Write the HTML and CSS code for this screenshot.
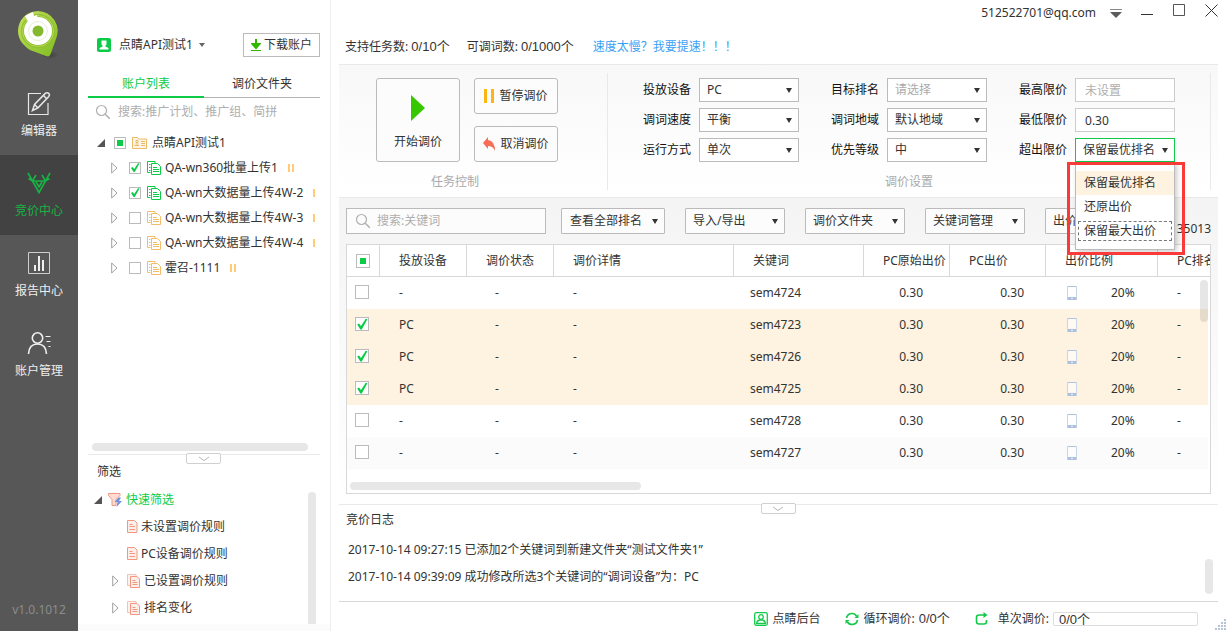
FILE: index.html
```html
<!DOCTYPE html>
<html lang="zh-CN">
<head>
<meta charset="utf-8">
<title>竞价中心</title>
<link rel="stylesheet" href="styles.css">
</head>
<body>
<svg class="defs" aria-hidden="true">
  <symbol id="i-docs" viewBox="0 0 14 14">
    <path d="M3.500 11.500h-3V.500h7.500v1.500" fill="none" stroke="currentColor"/>
    <path d="M2 3.500h1.500M2 6.500h1.500M2 9.500h1.500" stroke="currentColor"/>
    <path d="M4.500 2.500h6l3 3v8h-9z" fill="#fff" stroke="currentColor"/>
    <path d="M6 6.500h4M6 8.500h6M6 10.500h6" stroke="currentColor"/>
  </symbol>
  <symbol id="i-doc" viewBox="0 0 11 13">
    <path d="M.5.5h7l2.500 2.500v9.500H.5z" fill="#fdeee9" stroke="currentColor"/>
    <path d="M2.500 4.500h3M2.500 6.500h5.500M2.500 9.500h5.500" stroke="currentColor"/>
  </symbol>
  <symbol id="i-docs2" viewBox="0 0 14 14">
    <path d="M3 11.500H.5V.5h8.500v2" fill="#fdeee9" stroke="currentColor" opacity=".6"/>
    <path d="M3.500 2.500h6.500l2.500 2.500v8.500h-9z" fill="#fdeee9" stroke="currentColor"/>
    <path d="M5.500 6.500h3M5.500 8.500h5M5.500 10.500h5" stroke="currentColor"/>
  </symbol>
  <symbol id="i-search" viewBox="0 0 16 16">
    <circle cx="6.500" cy="6.500" r="5" fill="none" stroke="currentColor" stroke-width="1.200"/>
    <path d="M10.300 10.300l4.500 4.500" stroke="currentColor" stroke-width="1.500"/>
  </symbol>
  <symbol id="i-closed" viewBox="0 0 7 12">
    <path d="M.7 1v10l5.300-5z" fill="none" stroke="#a0a0a0"/>
  </symbol>
  <symbol id="i-open" viewBox="0 0 8 8"><path d="M8 0v8H0z" fill="#555"/></symbol>
  <symbol id="i-down" viewBox="0 0 12 6"><path d="M1 1l5 3.500L11 1" fill="none" stroke="#b5b5b5"/></symbol>
  <symbol id="i-phone" viewBox="0 0 10 14">
    <rect x="1" y="1" width="8" height="12" fill="#fff" fill-opacity=".6"/>
    <path d="M.5 0v14M9.500 0v14" stroke="#c8d5e8"/>
    <path d="M1 .5h8" stroke="#b3c5de"/>
    <path d="M1 11h8v3H1z" fill="#adc1dc"/>
    <path d="M4 12.500h2" stroke="#e6eef8"/>
  </symbol>
</svg>

<div class="app">
  <nav class="nav">
    <svg class="logo" viewBox="0 0 44 50">
      <defs>
        <linearGradient id="g" x1="0" y1="0" x2="1" y2="1"><stop offset="0" stop-color="#c5e05c"/><stop offset="1" stop-color="#7fbd22"/></linearGradient>
        <radialGradient id="sh"><stop offset="0" stop-color="#333" stop-opacity=".6"/><stop offset="1" stop-color="#333" stop-opacity="0"/></radialGradient>
      </defs>
      <ellipse cx="33" cy="45" rx="9" ry="4" fill="url(#sh)"/>
      <path d="M21 1a20 20 0 0 0-20 20c0 9 6 15 12 19l16 6c3 1 4 0 5-3l5-14A20 20 0 0 0 21 1z" fill="url(#g)"/>
      <circle cx="21" cy="21" r="17" fill="#8fc02e"/>
      <circle cx="21" cy="21" r="15.500" fill="none" stroke="#b9d957" stroke-width="1"/>
      <circle cx="21" cy="21" r="14" fill="#fff"/>
      <path d="M8 6l8-4 1 4 3-1 2 8-9 3z" fill="#fff"/>
      <circle cx="21" cy="21" r="9.500" fill="none" stroke="#e6eed6" stroke-width="1"/>
      <circle cx="21" cy="21" r="5.500" fill="#84b92f"/>
    </svg>
    <a class="nav-item" href="#">
      <svg viewBox="0 0 24 24" fill="none" stroke="#e8e8e8"><path d="M14 2.500H1.500v21h19.500V12" stroke-width="1.200"/><path d="M5.500 19.500l2-6L18.500 2.200q2-1.200 3.300.2t0 3L11 16.800zM16.500 4.500l3.200 3.200M7.500 13.500l3.200 3.300" stroke-width="1.500"/></svg>
      <span>编辑器</span>
    </a>
    <a class="nav-item active" href="#">
      <svg viewBox="0 0 24 24" fill="none" stroke="#17b345" stroke-width="1.600"><path d="M1 2l4.500 8h13L23 2M5.500 10l6.500 11.500L18.500 10M1.500 7.500l4 2.500 3.500-6M22.500 7.500l-4 2.500L15 4M9 11l3 5 3-5"/></svg>
      <span>竞价中心</span>
    </a>
    <a class="nav-item" href="#">
      <svg viewBox="0 0 24 24" fill="none" stroke="#e8e8e8"><path d="M1.500 1.500h21v21h-21z" stroke="#cfcfcf"/><path d="M8 20v-6M12 20V5M16 20V9" stroke="#fff" stroke-width="1.800"/></svg>
      <span>报告中心</span>
    </a>
    <a class="nav-item" href="#">
      <svg viewBox="0 0 24 24" fill="none" stroke="#f0f0f0" stroke-width="1.600"><circle cx="10.500" cy="7" r="5.200"/><path d="M1.500 23q.5-10 9-10t9 10"/><path d="M18.500 5.500h5M19.500 10.500h4M21.500 15.500h2" stroke-width="1.200"/></svg>
      <span>账户管理</span>
    </a>
    <span class="version">v1.0.1012</span>
  </nav>

  <aside class="side">
    <div class="account">
      <svg class="ic14" viewBox="0 0 14 14"><rect width="14" height="14" rx="2" fill="#0ccb47"/><path d="M4.500 2.500h5v4l-1 1v1l3 1.500v1.500h-9v-1.500l3-1.500v-1l-1-1z" fill="#fff"/></svg>
      <button class="account-name">点睛API测试1<span class="tri"></span></button>
      <button class="download"><svg viewBox="0 0 10 12"><path d="M5 0v7M1.500 5L5 9l3.500-4z" fill="#2fb800" stroke="#2fb800" stroke-width="2"/><path d="M0 11.500h10" stroke="#2fb800"/></svg>下载账户</button>
    </div>
    <div class="tabs">
      <button class="tab on">账户列表</button>
      <button class="tab">调价文件夹</button>
    </div>
    <label class="side-search"><svg class="ic16"><use href="#i-search"/></svg><input type="text" aria-label="搜索" placeholder="搜索:推广计划、推广组、简拼"></label>
    <ul class="tree">
      <li class="root"><svg class="open"><use href="#i-open"/></svg><input type="checkbox" class="ck some" aria-label="点睛API测试1">
        <svg class="folder" viewBox="0 0 15 12" fill="none" stroke="#edba69"><path d="M.5 11.500V.5h5l1 1.500h8v9.500z" fill="#fdf5e6"/><path d="M4 3.500h2v2H4zM2.500 8.500h4.500M3.500 7h3M9 4.500h4M9 6.500h4M9 8.500h4"/></svg><span>点睛API测试1</span></li>
      <li><svg class="closed"><use href="#i-closed"/></svg><input type="checkbox" class="ck" checked aria-label="QA-wn360批量上传1"><svg class="docs green"><use href="#i-docs"/></svg><span>QA-wn360批量上传1</span><i class="bars"></i></li>
      <li><svg class="closed"><use href="#i-closed"/></svg><input type="checkbox" class="ck" checked aria-label="QA-wn大数据量上传4W-2"><svg class="docs green"><use href="#i-docs"/></svg><span>QA-wn大数据量上传4W-2</span><i class="bars"></i></li>
      <li><svg class="closed"><use href="#i-closed"/></svg><input type="checkbox" class="ck" aria-label="QA-wn大数据量上传4W-3"><svg class="docs"><use href="#i-docs"/></svg><span>QA-wn大数据量上传4W-3</span><i class="bars"></i></li>
      <li><svg class="closed"><use href="#i-closed"/></svg><input type="checkbox" class="ck" aria-label="QA-wn大数据量上传4W-4"><svg class="docs"><use href="#i-docs"/></svg><span>QA-wn大数据量上传4W-4</span><i class="bars"></i></li>
      <li><svg class="closed"><use href="#i-closed"/></svg><input type="checkbox" class="ck" aria-label="霍召-1111"><svg class="docs"><use href="#i-docs"/></svg><span>霍召-1111</span><i class="bars"></i></li>
    </ul>
    <div class="side-hbar"></div>
    <div class="split"><button aria-label="折叠"><svg><use href="#i-down"/></svg></button></div>
    <div class="filter">
      <h2>筛选</h2>
      <div class="filter-body">
        <ul class="rules">
          <li class="top"><svg class="open"><use href="#i-open"/></svg><svg class="funnel" viewBox="0 0 15 14"><path d="M.5.5h11.500v2L8 6.500v6H4v-6L.5 2.500z" fill="#fcdcd3" stroke="#f0987f"/><path d="M10.500 4.500L6.500 9h3l-1 5L14 8h-3l2-3.500z" fill="#6e93e0"/></svg><span>快速筛选</span></li>
          <li class="leaf"><svg class="doc"><use href="#i-doc"/></svg><span>未设置调价规则</span></li>
          <li class="leaf"><svg class="doc"><use href="#i-doc"/></svg><span>PC设备调价规则</span></li>
          <li class="group"><svg class="closed"><use href="#i-closed"/></svg><svg class="doc2"><use href="#i-docs2"/></svg><span>已设置调价规则</span></li>
          <li class="group"><svg class="closed"><use href="#i-closed"/></svg><svg class="doc2"><use href="#i-docs2"/></svg><span>排名变化</span></li>
        </ul>
        <div class="filter-vbar"></div>
      </div>
    </div>
  </aside>

  <main class="main">
    <header class="titlebar">
      <span class="mail">512522701@qq.com</span>
      <button aria-label="菜单" class="wb menu"><svg viewBox="0 0 12 10"><path d="M0 .5h12" stroke="#888"/><path d="M0 3h12L6 9z" fill="#5c5c5c"/></svg></button>
      <button aria-label="最小化" class="wb"><svg viewBox="0 0 13 13"><path d="M0 10.500h12" stroke="#333"/></svg></button>
      <button aria-label="最大化" class="wb"><svg viewBox="0 0 13 13"><path d="M.5.5h11v11H.5z" fill="none" stroke="#555"/></svg></button>
      <button aria-label="关闭" class="wb"><svg viewBox="0 0 13 13"><path d="M.5.500l12 12M12.500.500l-12 12" stroke="#333"/></svg></button>
    </header>
    <div class="quota">
      <span>支持任务数: <span class="num">0/10个</span></span>
      <span>可调词数: <span class="num">0/1000个</span></span>
      <a href="#">速度太慢<span class="wide-mark">？</span>我要提速<span class="wide-mark">！！！</span></a>
    </div>

    <section class="panel">
      <div class="task">
        <div class="task-buttons">
          <button class="start"><svg viewBox="0 0 14 26"><path d="M0 0v26l14-13z" fill="#36c700"/></svg>开始调价</button>
          <button><svg width="10" height="14" viewBox="0 0 10 14"><path d="M0 0h3v14H0zM7 0h3v14H7z" fill="#ffb414"/></svg>暂停调价</button>
          <button><svg width="12" height="14" viewBox="0 0 12 14"><path d="M0 6l5-6v3q7 1 7 11-2-5-7-5v3z" fill="#f76d57"/></svg>取消调价</button>
        </div>
        <p>任务控制</p>
      </div>
      <div class="settings">
        <div class="fields">
          <div class="field"><label for="dev">投放设备</label><div class="sel"><select id="dev"><option>PC</option></select></div></div>
          <div class="field"><label for="rank">目标排名</label><div class="sel dim"><select id="rank"><option>请选择</option></select></div></div>
          <div class="field"><label for="max">最高限价</label><input id="max" type="text" placeholder="未设置"></div>
          <div class="field"><label for="speed">调词速度</label><div class="sel"><select id="speed"><option>平衡</option></select></div></div>
          <div class="field"><label for="area">调词地域</label><div class="sel"><select id="area"><option>默认地域</option></select></div></div>
          <div class="field"><label for="min">最低限价</label><input id="min" type="text" value="0.30"></div>
          <div class="field"><label for="mode">运行方式</label><div class="sel"><select id="mode"><option>单次</option></select></div></div>
          <div class="field"><label for="prio">优先等级</label><div class="sel"><select id="prio"><option>中</option></select></div></div>
          <div class="field"><label for="over">超出限价</label><div class="sel opened"><select id="over"><option>保留最优排名</option></select>
            <ul class="menu-list"><li class="hot">保留最优排名</li><li>还原出价</li><li class="focus">保留最大出价</li></ul>
            <div class="mark"></div>
          </div></div>
        </div>
        <p>调价设置</p>
      </div>
    </section>

    <section class="work">
      <div class="tools">
        <label class="find"><svg class="ic16"><use href="#i-search"/></svg><input type="text" aria-label="搜索关键词" placeholder="搜索:关键词"></label>
        <button class="drop wide">查看全部排名</button>
        <button class="drop">导入/导出</button>
        <button class="drop">调价文件夹</button>
        <button class="drop">关键词管理</button>
        <button class="drop">出价</button>
        <span class="total">35013</span>
      </div>
      <div class="grid">
        <table>
          <colgroup><col class="c1"><col class="c2"><col class="c2"><col class="c4"><col class="c5"><col class="c6"><col class="c7"><col class="c8"><col></colgroup>
          <thead><tr><th><input type="checkbox" class="ck some" aria-label="全选"></th><th>投放设备</th><th>调价状态</th><th>调价详情</th><th>关键词</th><th>PC原始出价</th><th>PC出价</th><th>出价比例</th><th>PC排名</th></tr></thead>
          <tbody>
            <tr><td><input type="checkbox" class="ck" aria-label="sem4724"></td><td>-</td><td>-</td><td>-</td><td>sem4724</td><td>0.30</td><td>0.30</td><td><span class="ratio"><svg class="phone"><use href="#i-phone"/></svg>20%</span></td><td>-</td></tr>
            <tr class="picked"><td><input type="checkbox" class="ck" checked aria-label="sem4723"></td><td>PC</td><td>-</td><td>-</td><td>sem4723</td><td>0.30</td><td>0.30</td><td><span class="ratio"><svg class="phone"><use href="#i-phone"/></svg>20%</span></td><td>-</td></tr>
            <tr class="picked"><td><input type="checkbox" class="ck" checked aria-label="sem4726"></td><td>PC</td><td>-</td><td>-</td><td>sem4726</td><td>0.30</td><td>0.30</td><td><span class="ratio"><svg class="phone"><use href="#i-phone"/></svg>20%</span></td><td>-</td></tr>
            <tr class="picked"><td><input type="checkbox" class="ck" checked aria-label="sem4725"></td><td>PC</td><td>-</td><td>-</td><td>sem4725</td><td>0.30</td><td>0.30</td><td><span class="ratio"><svg class="phone"><use href="#i-phone"/></svg>20%</span></td><td>-</td></tr>
            <tr><td><input type="checkbox" class="ck" aria-label="sem4728"></td><td>-</td><td>-</td><td>-</td><td>sem4728</td><td>0.30</td><td>0.30</td><td><span class="ratio"><svg class="phone"><use href="#i-phone"/></svg>20%</span></td><td>-</td></tr>
            <tr class="alt"><td><input type="checkbox" class="ck" aria-label="sem4727"></td><td>-</td><td>-</td><td>-</td><td>sem4727</td><td>0.30</td><td>0.30</td><td><span class="ratio"><svg class="phone"><use href="#i-phone"/></svg>20%</span></td><td>-</td></tr>
          </tbody>
        </table>
        <div class="grid-vbar"></div>
        <div class="grid-hbar"></div>
      </div>
    </section>

    <div class="split"><button aria-label="折叠日志"><svg><use href="#i-down"/></svg></button></div>
    <section class="log">
      <div class="log-text">
        <h2>竞价日志</h2>
        <p>2017-10-14 09:27:15 已添加2个关键词到新建文件夹“测试文件夹1”</p>
        <p>2017-10-14 09:39:09 成功修改所选3个关键词的“调词设备”为<span class="wide-mark">：</span>PC</p>
      </div>
      <div class="log-vbar"></div>
    </section>
    <footer class="status">
      <a href="#"><svg class="ic14" viewBox="0 0 14 14" fill="none" stroke="#13c94b" stroke-width="1.300"><rect x=".7" y=".7" width="12.600" height="12.600" rx="1.500"/><circle cx="7" cy="5" r="2.300"/><path d="M2.500 11.500h9q-.5-3-3-3.500h-3q-2.500.5-3 3.500z"/></svg>点睛后台</a>
      <span class="loop"><svg class="ic14" viewBox="0 0 14 14" fill="none" stroke="#13c94b" stroke-width="1.700"><path d="M1.500 6q1-4.500 5.500-4.500 3 0 4.500 2.500M12.500 8q-1 4.500-5.500 4.500-3 0-4.500-2.500"/><path d="M13.500 2v4h-4zM.5 12V8h4z" fill="#13c94b" stroke="none"/></svg>循环调价: <span class="num">0/0个</span></span>
      <span class="once"><svg class="ic14" viewBox="0 0 14 14" fill="none" stroke="#13c94b" stroke-width="1.600"><path d="M9 3H4Q1.500 3 1.500 5.500v4q0 2.500 2.500 2.500h5q2.500 0 2.500-2.500V8"/><path d="M8.500 0v6l4-3z" fill="#13c94b" stroke="none"/></svg><label for="prog">单次调价:</label><input id="prog" class="num" type="text" value="0/0个" readonly></span>
      <svg class="grip" viewBox="0 0 12 12"><path d="M10 1h2M7 4h2M10 4h2M4 7h2M7 7h2M10 7h2M1 10h2M4 10h2M7 10h2M10 10h2" stroke="#b7c3d6" stroke-width="2"/></svg>
    </footer>
  </main>
</div>
</body>
</html>
```

FILE: styles.css
```css
* { box-sizing: border-box; }
body, ul, p, h2 { margin: 0; padding: 0; }
body, button, input, select {
  font: 12px/16px "Noto Sans", "Noto Sans CJK SC", sans-serif;
  color: #333;
}
ul { list-style: none; }
h2 { font-size: 12px; font-weight: 400; }
a { color: inherit; text-decoration: none; }
button { padding: 0; border: 0; background: none; white-space: nowrap; }
input { outline: 0; min-width: 0; }
input::placeholder { color: #aeaeae; opacity: 1; }
svg { display: block; flex: none; }
.defs { display: none; }
.num { font-family: "Liberation Sans", "Noto Sans CJK SC", sans-serif; font-size: 13px; }
.wide-mark { font-family: "Noto Sans CJK TC", sans-serif; line-height: 1; }
.ic14 { width: 14px; height: 14px; }
.ic16 { width: 16px; height: 16px; color: #b0b0b0; }

.app { display: flex; min-height: 100vh; background: #fff; }

/* navigation rail */
.nav { flex: none; width: 78px; display: flex; flex-direction: column; align-items: center; background: #575757; color: #eee; }
.logo { width: 44px; height: 50px; margin: 10px 0 15px; }
.nav-item { width: 100%; height: 80px; padding-top: 16px; display: flex; flex-direction: column; align-items: center; gap: 8px; }
.nav-item svg { width: 24px; height: 24px; }
.nav-item.active { background: #424242; color: #17b345; }
.version { margin: auto 0 13px; color: #8c8c8c; }

/* account sidebar */
.side { flex: none; width: 253px; display: flex; flex-direction: column; padding: 33px 10px 0; border-right: 1px solid #eee; background: linear-gradient(#fbfbfb, #fbfbfb) bottom / 100% 7px no-repeat; }
.account { display: flex; align-items: center; height: 24px; padding-left: 9px; gap: 8px; }
.account-name { display: flex; align-items: center; gap: 6px; }
.tri { border: 3px solid transparent; border-top: 4px solid #666; border-bottom: 0; }
.download { display: flex; align-items: center; justify-content: center; gap: 3px; width: 77px; height: 24px; margin-left: auto; border: 1px solid #bbb; }
.download svg { width: 10px; height: 12px; }
.tabs { display: flex; height: 41px; padding-top: 14px; border-bottom: 1px solid #b4b4b4; }
.tab { flex: 1; height: 27px; border-bottom: 2px solid transparent; }
.tab.on { color: #0ccb47; border-color: #0ccb47; }
.side-search { display: flex; align-items: center; height: 28px; padding-left: 7px; gap: 7px; }
.side-search input { flex: 1; padding: 0; border: 0; background: none; }
.tree { padding-top: 4px; overflow: hidden; margin-right: 4px; }
.tree li { display: flex; align-items: center; height: 25px; padding-left: 23px; white-space: nowrap; }
.tree .root { padding-left: 9px; }
.open { width: 8px; height: 8px; }
.closed { width: 7px; height: 12px; }
.tree .ck { margin: 0 6px 0 11px; }
.tree .root .ck { margin-left: 9px; }
.folder { width: 15px; height: 12px; margin-right: 5px; }
.docs { width: 14px; height: 14px; margin-right: 4px; color: #f3bd6c; }
.docs.green { color: #0ccb47; }
.bars { flex: none; width: 6px; height: 8px; margin-left: 10px; border: solid #ffcb74; border-width: 0 2px; }
.side-hbar { width: 216px; height: 8px; margin: auto 0 3px 4px; border-radius: 4px; background: #e7e7e7; }

.ck { appearance: none; flex: none; display: grid; place-items: center; width: 12px; height: 12px; margin: 0; border: 1px solid #bbb; background: #fff; }
.ck:checked::before { content: ""; width: 100%; height: 100%; background: #0ccb47; clip-path: polygon(10% 55%, 25% 45%, 42% 66%, 80% 8%, 96% 8%, 48% 96%, 36% 96%); }
.ck.some::before { content: ""; width: 6px; height: 6px; background: #0ccb47; }

.split { position: relative; height: 1px; background: #e9e9e9; }
.split button { position: absolute; left: calc(50% - 18px); top: -1px; width: 35px; height: 11px; display: grid; place-items: center; border: 1px solid #d0d0d0; border-radius: 2px; background: #fff; }
.split svg { width: 12px; height: 6px; }

.filter { padding: 9px 0 7px; }
.filter h2 { padding-left: 9px; }
.filter-body { display: flex; justify-content: space-between; padding-top: 6px; }
.filter-vbar { width: 8px; margin: 6px 4px 0 0; border-radius: 4px 4px 0 0; background: #e7e7e7; }
.rules { margin-bottom: 3px; }
.rules li { display: flex; align-items: center; height: 27px; }
.rules .top { padding-left: 6px; color: #0ccb47; }
.funnel { width: 15px; height: 14px; margin: 0 3px 0 6px; }
.rules .leaf { padding-left: 39px; }
.rules .group { padding-left: 24px; }
.doc { width: 11px; height: 13px; margin-right: 3px; color: #f0987f; }
.doc2 { width: 14px; height: 14px; margin: 0 3px 0 8px; color: #f0987f; }

/* main column */
.main { flex: 1; min-width: 0; display: flex; flex-direction: column; padding: 0 8px; }
.titlebar { display: flex; justify-content: flex-end; height: 26px; padding-top: 4px; }
.mail { margin-right: 14px; line-height: 18px; }
.wb { width: 13px; height: 13px; margin-left: 19px; }
.wb.menu { width: 12px; height: 10px; margin: 5px 0 0; }
.quota { display: flex; align-items: center; gap: 17px; height: 38px; padding: 4px 6px 0; }
.quota a { color: #3ba0f5; margin-left: 2px; }

.panel { display: flex; padding-top: 8px; margin-bottom: 7px; border-top: 1px solid #e9e9e9; background: linear-gradient(#f8f8f8, #fff); }
.panel p { margin-top: 12px; text-align: center; color: #aaa; }
.task { width: 269px; padding: 5px 37px 0; border-right: 1px solid #e9e9e9; }
.task p { padding-right: 36px; }
.task-buttons { display: grid; grid-template: 36px 36px / 84px 84px; gap: 12px 14px; }
.task-buttons button { display: flex; align-items: center; justify-content: center; gap: 5px; border: 1px solid #bbb; border-radius: 3px; background: #fcfcfc; }
.task-buttons .start { grid-row: span 2; flex-direction: column; gap: 13px; padding-top: 5px; }
.start svg { width: 14px; height: 26px; }
.settings { flex: 1; margin-right: 7px; padding-top: 5px; border-right: 1px solid #e9e9e9; }
.fields { display: grid; grid-template-columns: repeat(3, 156px); justify-content: center; gap: 6px 32px; }
.field { display: flex; align-items: center; gap: 8px; height: 24px; }
.field label { color: #111; flex: none; }
.field > input { width: 100px; height: 24px; padding: 0 9px; border: 1px solid #ccc; }
.sel { position: relative; width: 100px; }
.sel select { appearance: none; width: 100%; height: 24px; padding: 0 7px; border: 1px solid #bbb; border-radius: 0; background: #fff; }
.sel.dim select { color: #aaa; }
.sel.opened select { border-color: #0ccb47; }
.sel::after, .drop::after { content: ""; border: 3px solid transparent; border-top: 5px solid #333; border-bottom: 0; }
.sel::after { position: absolute; right: 7px; top: 10px; }
.menu-list { position: absolute; z-index: 2; top: 24px; left: 0; width: 100%; padding: 8px 0 6px; border: 1px solid #bbb; background: #fff; box-shadow: 2px 2px 5px #0003; }
.menu-list li { padding: 4px 8px; }
.menu-list .hot { background: #fdf3e0; }
.menu-list .focus { outline: 1px dashed #777; outline-offset: -3px; }
.mark { position: absolute; z-index: 3; top: 24px; left: -8px; right: -10px; height: 93px; border: 3px solid #fa3939; }

.work { flex: 1; display: flex; flex-direction: column; padding: 10px 7px; border-top: 1px solid #e9e9e9; background: linear-gradient(#f4f4f4, #fff); }
.tools { display: flex; gap: 20px; height: 36px; white-space: nowrap; }
.find { display: flex; align-items: center; gap: 6px; width: 200px; height: 26px; margin-right: -5px; padding: 0 8px; border: 1px solid #bbb; background: #fcfcfc; }
.find input { border: 0; padding: 0; flex: 1; background: none; }
.drop { display: flex; align-items: center; justify-content: space-between; width: 100px; height: 26px; padding: 0 6px 0 7px; border: 1px solid #bbb; border-radius: 1px; background: #fcfcfc; }
.drop.wide { width: 104px; padding-left: 8px; }
.total { margin: 13px 0 0 auto; }
.grid { position: relative; flex: 1; display: flex; flex-direction: column; overflow: hidden; border: 1px solid #d8d8d8; background: #fff; }
.grid table { width: 100%; table-layout: fixed; border-collapse: separate; border-spacing: 0; }
.c1 { width: 33px; } .c2 { width: 87px; } .c4 { width: 180px; } .c5 { width: 130px; }
.c6 { width: 86px; } .c7 { width: 96px; } .c8 { width: 112px; }
th, td { height: 32px; padding: 0; overflow: hidden; white-space: nowrap; text-align: left; font-weight: 400; }
th { padding-left: 19px; border: solid #d8d8d8; border-width: 0 1px 1px 0; }
th:last-child { border-right: 0; }
th .ck, td .ck { width: 14px; height: 14px; }
th .ck { margin-left: -10px; }
td .ck { margin: 0 0 2px 8px; }
td:nth-child(2), td:nth-child(4), td:nth-child(9) { padding-left: 19px; }
td:nth-child(3) { padding-left: 28px; }
td:nth-child(5) { padding-left: 16px; }
td:nth-child(6) { padding-right: 27px; text-align: right; }
td:nth-child(7) { padding-right: 22px; text-align: right; }
td:nth-child(8) { padding-left: 21px; }
td:last-child { box-shadow: inset -2px 0 #fff; }
.ratio { display: flex; align-items: center; gap: 34px; }
.phone { width: 10px; height: 14px; }
.picked { background: #fdf3e0; }
.alt { background: #fbfbfb; }
.grid-vbar { position: absolute; right: 2px; top: 35px; width: 8px; height: 42px; border-radius: 4px; background: #00000019; }
.grid-hbar { width: 291px; height: 8px; margin: auto 0 3px 3px; border-radius: 4px; background: #e7e7e7; }

.log { display: flex; justify-content: space-between; padding: 5px 5px 7px 7px; }
.log h2 { line-height: 20px; margin-bottom: 6px; }
.log p { padding-left: 2px; line-height: 27px; }
.log-vbar { align-self: flex-end; width: 8px; height: 35px; border-radius: 4px; background: #e7e7e7; }
.log-text { padding-bottom: 4px; }

.status { position: relative; display: flex; align-items: center; justify-content: flex-end; gap: 25px; height: 30px; padding: 4px 20px 0 0; border-top: 1px solid #d8d8d8; }
.status a, .status span { display: flex; align-items: center; gap: 4px; }
.status .once .ic14 { margin-right: 5px; }
.status input { width: 145px; height: 14px; padding: 0 5px; border: 1px solid #ddd; border-radius: 2px; line-height: 12px; }
.grip { position: absolute; right: -8px; bottom: 0; width: 12px; height: 12px; }
```
